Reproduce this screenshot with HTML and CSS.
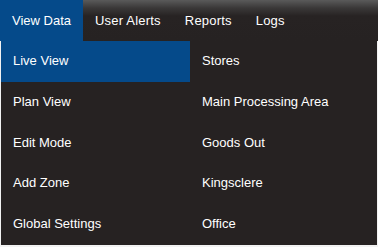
FILE: index.html
```html
<!DOCTYPE html>
<html>
<head>
<meta charset="utf-8">
<link rel="stylesheet" href="styles.css">
</head>
<body>
<nav class="navbar">
  <ul class="nav">
    <li class="nav-item active">View Data</li>
    <li class="nav-item">User Alerts</li>
    <li class="nav-item">Reports</li>
    <li class="nav-item">Logs</li>
  </ul>
  <div class="dropdown">
    <ul class="col">
      <li class="item selected">Live View</li>
      <li class="item">Plan View</li>
      <li class="item">Edit Mode</li>
      <li class="item">Add Zone</li>
      <li class="item">Global Settings</li>
    </ul>
    <ul class="col">
      <li class="item">Stores</li>
      <li class="item">Main Processing Area</li>
      <li class="item">Goods Out</li>
      <li class="item">Kingsclere</li>
      <li class="item">Office</li>
    </ul>
  </div>
</nav>
</body>
</html>
```
FILE: styles.css
```css
html, body {
  margin: 0;
  padding: 0;
}
body {
  background: #f2f2f2;
  font-family: "Liberation Sans", Arial, sans-serif;
  font-size: 13px;
  color: #ffffff;
  width: 378px;
  height: 247px;
  overflow: hidden;
}
.navbar {
  position: relative;
  height: 41px;
  background: linear-gradient(to bottom, #5a5a5a 0px, #3a3838 8px, #272323 16px, #262222 41px);
}
.nav {
  list-style: none;
  margin: 0;
  padding: 0;
  display: flex;
  height: 41px;
}
.nav-item {
  padding: 0 12px;
  line-height: 41px;
  height: 41px;
  letter-spacing: 0.2px;
}
.nav-item.active {
  background: #054a8a;
  letter-spacing: 0;
}
.dropdown {
  position: absolute;
  top: 41px;
  left: 1px;
  width: 376px;
  height: 204px;
  background: #262222;
  display: flex;
}
.col {
  list-style: none;
  margin: 0;
  padding: 0;
  width: 189px;
}
.col + .col {
  width: 187px;
}
.item {
  height: 40.8px;
  line-height: 40.8px;
  padding: 0 12px;
}
.item.selected {
  background: #054a8a;
}
```
